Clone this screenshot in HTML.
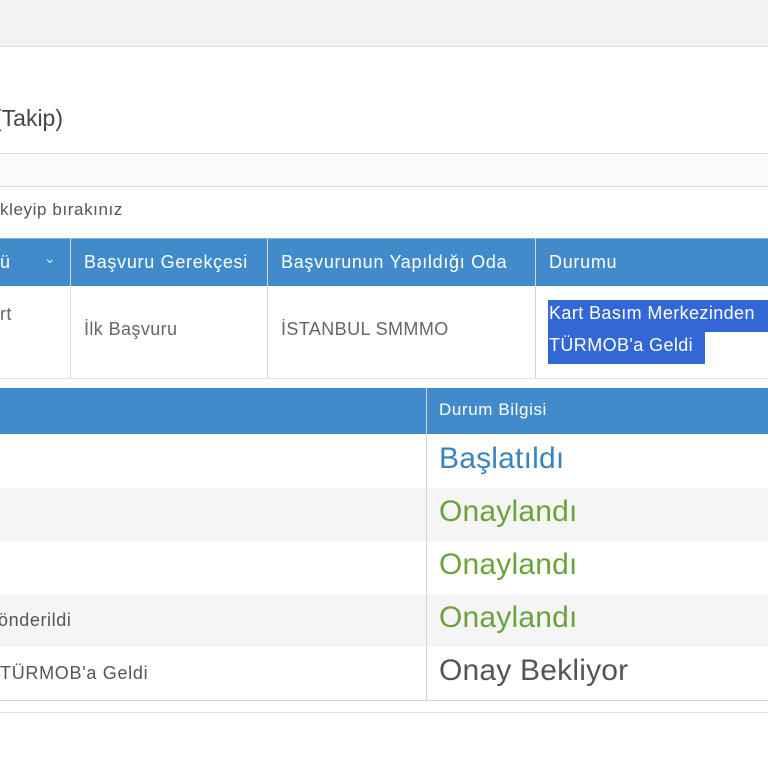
<!DOCTYPE html>
<html><head><meta charset="utf-8"><style>
body{margin:0;width:768px;height:768px;overflow:hidden;background:#fff;font-family:"Liberation Sans",sans-serif;position:relative}
div{position:absolute;box-sizing:border-box}
.t{white-space:nowrap}
.hd{background:#428bca;color:#fff}
.h{font-size:18px;letter-spacing:0.7px;color:#fff}
.c{font-size:18px;letter-spacing:0.4px;color:#666}
.big{font-size:30px;letter-spacing:0.2px}
</style></head><body>
<div style="left:0;top:0;width:768px;height:47px;background:#f2f2f2;border-bottom:1px solid #dcdcdc"></div>
<div class="t" style="left:-6px;top:105px;font-size:23px;color:#444">(Takip)</div>
<div style="left:0;top:153px;width:768px;height:34px;background:#fafafa;border-top:1px solid #dcdcdc;border-bottom:1px solid #dcdcdc"></div>
<div class="t" style="left:0;top:200px;font-size:17px;letter-spacing:0.6px;color:#555">kleyip bırakınız</div>
<div class="hd" style="left:0;top:238px;width:768px;height:48px;border-top:1px solid #7fb2de"></div>
<div class="t h" style="left:0;top:252px">ü</div>
<div class="t" style="left:44px;top:250px;font-size:14px;color:#dbe9f6">⌄</div>
<div style="left:70px;top:238px;height:140px;border-left:1px solid #d6d6d6"></div>
<div style="left:267px;top:238px;height:140px;border-left:1px solid #d6d6d6"></div>
<div style="left:535px;top:238px;height:140px;border-left:1px solid #d6d6d6"></div>
<div class="t h" style="left:84px;top:252px">Başvuru Gerekçesi</div>
<div class="t h" style="left:281px;top:252px">Başvurunun Yapıldığı Oda</div>
<div class="t h" style="left:549px;top:252px">Durumu</div>
<div class="t c" style="left:0;top:304px">rt</div>
<div class="t c" style="left:84px;top:319px">İlk Başvuru</div>
<div class="t c" style="left:281px;top:319px">İSTANBUL SMMMO</div>
<div style="left:548px;top:300px;width:220px;height:32px;background:#3367d6"></div>
<div style="left:548px;top:332px;width:157px;height:32px;background:#3367d6"></div>
<div class="t c" style="left:549px;top:303px;color:#fff">Kart Basım Merkezinden</div>
<div class="t c" style="left:549px;top:335px;color:#fff">TÜRMOB'a Geldi</div>
<div style="left:0;top:378px;width:768px;border-top:1px solid #e0e0e0"></div>
<div class="hd" style="left:0;top:388px;width:768px;height:46px"></div>
<div style="left:426px;top:388px;height:312px;border-left:1px solid #d6d6d6"></div>
<div class="t" style="left:439px;top:400px;font-size:17px;letter-spacing:0.6px;color:#fff">Durum Bilgisi</div>
<div style="left:0;top:488px;width:426px;height:53px;background:#f5f5f5"></div>
<div style="left:0;top:594px;width:426px;height:53px;background:#f5f5f5"></div>
<div style="left:427px;top:488px;width:341px;height:53px;background:#f5f5f5"></div>
<div style="left:427px;top:594px;width:341px;height:53px;background:#f5f5f5"></div>
<div class="t big" style="left:439px;top:442px;color:#3a83c2">Başlatıldı</div>
<div class="t big" style="left:439px;top:495px;color:#6aa33a">Onaylandı</div>
<div class="t big" style="left:439px;top:548px;color:#6aa33a">Onaylandı</div>
<div class="t big" style="left:439px;top:601px;color:#6aa33a">Onaylandı</div>
<div class="t big" style="left:439px;top:654px;color:#555">Onay Bekliyor</div>
<div class="t" style="left:-2px;top:610px;font-size:18px;letter-spacing:0.6px;color:#555">önderildi</div>
<div class="t" style="left:0;top:663px;font-size:18px;letter-spacing:0.7px;color:#555">TÜRMOB'a Geldi</div>
<div style="left:0;top:700px;width:768px;border-top:1px solid #d6d6d6"></div>
<div style="left:0;top:712px;width:768px;border-top:1px solid #e0e0e0"></div>
</body></html>
